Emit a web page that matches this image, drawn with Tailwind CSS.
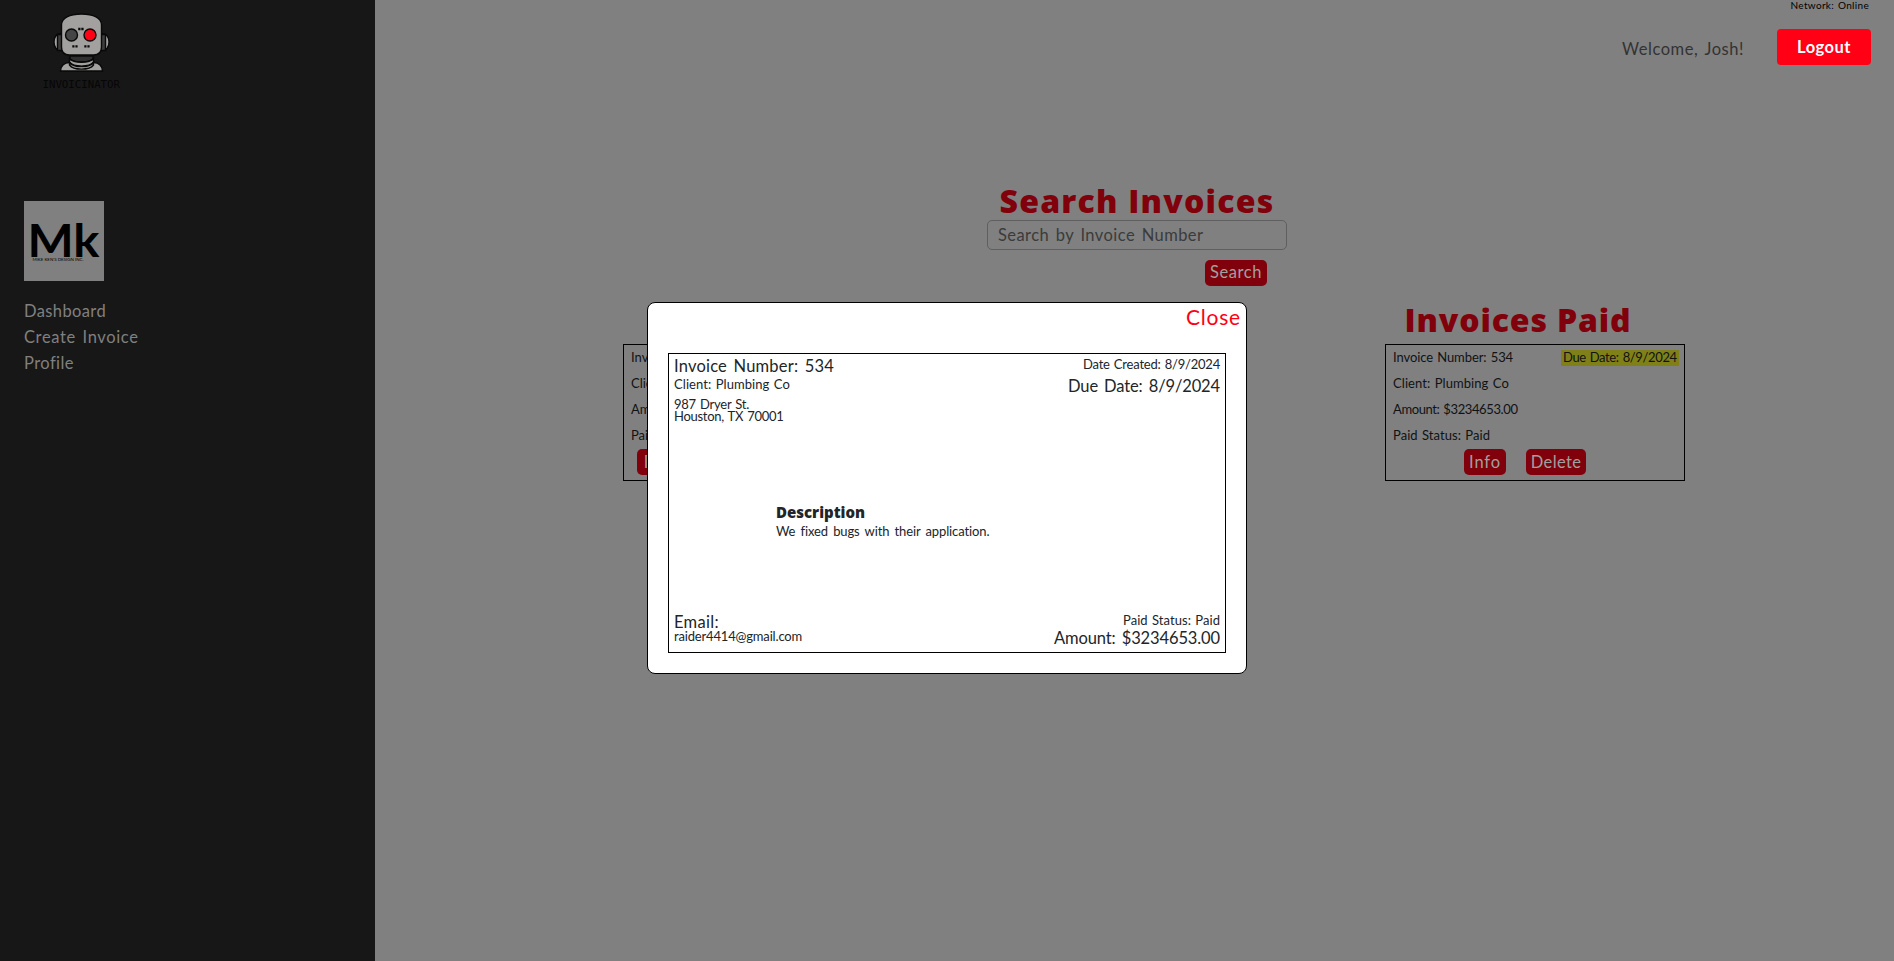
<!DOCTYPE html>
<html lang="en">
<head>
<meta charset="utf-8">
<title>Invoicinator</title>
<script src="https://cdn.jsdelivr.net/npm/@tailwindcss/browser@4"></script>
</head>
<body class="flex h-[961px] w-[1894px] overflow-hidden bg-[#808080] font-[Lato,sans-serif] whitespace-nowrap">
  <aside class="flex w-[375px] shrink-0 flex-col bg-[#171717] text-[16.5px] text-[#808080]">
    <svg class="ml-[30px] h-[100px] w-[110px] shrink-0" viewBox="0 0 110 100" stroke="#090909" stroke-width="1.4">
      <path d="M31 33.5C26 34 24 38 24 42s2 8 7 8.500z" fill="#a2a19f"/>
      <path d="M72 33.500c5 .5 7 4.500 7 8.500s-2 8-7 8.500z" fill="#a2a19f"/>
      <path d="M27.500 34.500h4.500v16h-4.500zM71 34.500h4.500v16H71z" fill="#3d3d3d"/>
      <path d="M30.500 71c0-5 3.500-8.500 9-8.500h24c5.500 0 9 3.500 9 8.500z" fill="#a2a19f"/>
      <path d="M40 56h23v3c-5 4-18 4-23 0z" fill="#303030"/>
      <path d="M39.500 58.500c4 5 20 5 24 0v3.500c-4 5.500-20 5.500-24 0z" fill="#a2a19f"/>
      <path d="M39.500 62.500c4 5.500 20 5.500 24 0v2.500c-4 5.500-20 5.500-24 0z" fill="#b0b0ae"/>
      <path d="M31.500 25c0-7 8-11 20-11s20 4 20 11v22c0 5-3 8-8 8h-24c-5 0-8-3-8-8z" fill="#a2a19f"/>
      <circle cx="41.500" cy="35" r="6" fill="#454545"/>
      <circle cx="60" cy="35" r="6" fill="#ff0015"/>
      <path d="M48.200 29h2.300M51.300 29h2.300M42.300 46.300h2.200M45.400 46.300h2.200M54.300 46.300h2.200M57.400 46.300h2.200" stroke-width="2.300"/>
      <text x="12.500" y="88.300" textLength="77.500" lengthAdjust="spacingAndGlyphs" fill="#060606" stroke="none" font-family="DejaVu Sans Mono" font-size="10.300">INVOICINATOR</text>
    </svg>
    <div class="mt-[101px] ml-6 size-20 bg-[#808080]">
      <svg class="size-20" viewBox="0 0 80 80">
        <text x="3.500" y="55.500" textLength="72" lengthAdjust="spacingAndGlyphs" font-family="Lato" font-size="46" font-weight="700">Mk</text>
        <text x="8.500" y="60" textLength="51" lengthAdjust="spacingAndGlyphs" font-family="Lato" font-size="4.200">MIKE KEN'S DESIGN INC.</text>
      </svg>
    </div>
    <nav class="mt-[17px] ml-6 flex flex-col leading-[26px] [word-spacing:2px]">
      <a class="tracking-[0.38px]">Dashboard</a>
      <a class="tracking-[0.62px]">Create Invoice</a>
      <a class="tracking-[0.43px]">Profile</a>
    </nav>
  </aside>

  <main class="flex w-[1519px] flex-col text-[#111214]">
    <p class="h-[29px] pr-[25px] text-right text-[10px] leading-[10px] tracking-[0.32px] text-black [word-spacing:1px]">Network: Online</p>
    <header class="flex h-9 justify-end pr-[23px] text-[16.5px]">
      <span class="mr-[33px] leading-[40px] tracking-[0.54px] text-[#333] [word-spacing:2px]">Welcome, Josh!</span>
      <button class="h-9 w-[94px] rounded bg-[#ff0015] pb-px text-center leading-[34px] font-bold tracking-[0.49px] text-white">Logout</button>
    </header>

    <section class="mt-[116px] ml-[612px] flex w-[300px] flex-col">
      <h2 class="flex h-[39px] justify-center font-['Open_Sans'] text-[32px] leading-[40px] font-extrabold tracking-[1.22px] text-[#80000b]">Search Invoices</h2>
      <div class="h-[30px] rounded-[5px] border border-[#5f5f5f] pl-2.5 text-[16.5px] leading-[28px] tracking-[0.43px] text-[#3b3b3b] [word-spacing:2px]">Search by Invoice Number</div>
      <button class="mt-2.5 mr-5 h-[26px] w-[62px] self-end rounded-[5px] bg-[#80000b] pb-0.5 text-center text-[16.5px] leading-[24px] tracking-[0.57px] text-[#a0a0a0]">Search</button>
    </section>

    <section class="mt-[16px] ml-[248px] flex gap-[462px] text-[13px] [word-spacing:1px]">
      <div class="flex w-[300px] flex-col pt-[42px]">
        <article class="flex h-[137px] flex-col border border-black pl-[7px] leading-[26px]">
          <p class="h-[25px] leading-6">Invoice Number:</p>
          <p>Client:</p>
          <p>Amount:</p>
          <p>Paid Status:</p>
          <button class="mt-px ml-1.5 h-[26px] w-[42px] rounded-[5px] bg-[#80000b] text-center text-[16.5px] leading-[24px] text-[#a0a0a0]">Info</button>
        </article>
      </div>
      <div class="flex w-[300px] flex-col">
        <h2 class="flex h-[42px] justify-center pr-[34px] font-['Open_Sans'] text-[32px] leading-[35px] font-extrabold tracking-[0.85px] text-[#80000b] [word-spacing:0px]">Invoices Paid</h2>
        <article class="flex h-[137px] flex-col border border-black pl-[7px] leading-[26px]">
          <div class="flex h-[25px] justify-between pr-[5px] leading-6">
            <p class="tracking-[-0.09px]">Invoice Number: 534</p>
            <p class="mt-[5px] h-4 w-[118px] bg-[#808019] pl-0.5 leading-[14px] tracking-[-0.37px]">Due Date: 8/9/2024</p>
          </div>
          <p class="tracking-[0.07px]">Client: Plumbing Co</p>
          <p class="tracking-[-0.39px]">Amount: $3234653.00</p>
          <p class="tracking-[0.05px]">Paid Status: Paid</p>
          <div class="mt-px ml-[71px] flex gap-5 text-center text-[16.5px] text-[#a0a0a0]">
            <button class="h-[26px] w-[42px] rounded-[5px] bg-[#80000b] leading-[24px] tracking-[0.89px]">Info</button>
            <button class="h-[26px] w-[60px] rounded-[5px] bg-[#80000b] leading-[24px] tracking-[0.37px]">Delete</button>
          </div>
        </article>
      </div>
    </section>
  </main>

  <div role="dialog" class="absolute top-[302px] left-[647px] flex h-[372px] w-[600px] flex-col rounded-lg border border-black bg-white text-[13px] text-[#212529]">
    <button class="mr-[5px] h-[26px] self-end text-[21px] leading-[27px] tracking-[0.78px] text-[#ff0015]">Close</button>
    <div class="mt-6 ml-5 flex h-[300px] w-[558px] flex-col border border-black px-[5px]">
      <div class="flex h-[148px] justify-between">
        <div>
          <p class="h-[23px] text-[16.5px] leading-[24px] tracking-[0.21px] [word-spacing:2px]">Invoice Number: 534</p>
          <p class="leading-[14px] tracking-[0.07px] [word-spacing:1px]">Client: Plumbing Co</p>
          <p class="mt-[7px] leading-3 tracking-[-0.24px] [word-spacing:1px]">987 Dryer St.</p>
          <p class="leading-3 tracking-[-0.28px] [word-spacing:1px]">Houston, TX 70001</p>
        </div>
        <div class="text-right">
          <p class="leading-5 tracking-[-0.21px] [word-spacing:1px]">Date Created: 8/9/2024</p>
          <p class="text-[16.5px] leading-[24px] tracking-[-0.13px] [word-spacing:2px]">Due Date: 8/9/2024</p>
        </div>
      </div>
      <div class="ml-[102px] grow">
        <h3 class="font-['Open_Sans'] text-[15px] leading-5 font-extrabold">Description</h3>
        <p class="leading-[18px] tracking-[-0.12px] [word-spacing:2px]">We fixed bugs with their application.</p>
      </div>
      <div class="flex items-end justify-between">
        <div class="pb-[9px]">
          <p class="text-[16.5px] leading-[14px] tracking-[0.32px]">Email:</p>
          <p class="leading-[14px] tracking-[-0.17px]">raider4414@gmail.com</p>
        </div>
        <div class="pb-1 text-right">
          <p class="leading-[14px] tracking-[0.05px] [word-spacing:1px]">Paid Status: Paid</p>
          <p class="h-[21px] text-[16.5px] leading-[22px] tracking-[-0.12px] [word-spacing:2px]">Amount: $3234653.00</p>
        </div>
      </div>
    </div>
  </div>
</body>
</html>
